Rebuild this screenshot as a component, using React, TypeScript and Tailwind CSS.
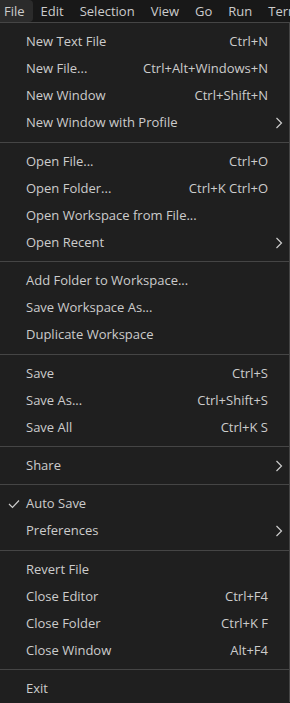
import React from "react";

type Item =
  | { type: "sep"; h: number }
  | { type: "item"; label: string; shortcut?: string; sub?: boolean; checked?: boolean };

const items: Item[] = [
  { type: "item", label: "New Text File", shortcut: "Ctrl+N" },
  { type: "item", label: "New File...", shortcut: "Ctrl+Alt+Windows+N" },
  { type: "item", label: "New Window", shortcut: "Ctrl+Shift+N" },
  { type: "item", label: "New Window with Profile", sub: true },
  { type: "sep", h: 12 },
  { type: "item", label: "Open File...", shortcut: "Ctrl+O" },
  { type: "item", label: "Open Folder...", shortcut: "Ctrl+K Ctrl+O" },
  { type: "item", label: "Open Workspace from File..." },
  { type: "item", label: "Open Recent", sub: true },
  { type: "sep", h: 11 },
  { type: "item", label: "Add Folder to Workspace..." },
  { type: "item", label: "Save Workspace As..." },
  { type: "item", label: "Duplicate Workspace" },
  { type: "sep", h: 12 },
  { type: "item", label: "Save", shortcut: "Ctrl+S" },
  { type: "item", label: "Save As...", shortcut: "Ctrl+Shift+S" },
  { type: "item", label: "Save All", shortcut: "Ctrl+K S" },
  { type: "sep", h: 11 },
  { type: "item", label: "Share", sub: true },
  { type: "sep", h: 11 },
  { type: "item", label: "Auto Save", checked: true },
  { type: "item", label: "Preferences", sub: true },
  { type: "sep", h: 12 },
  { type: "item", label: "Revert File" },
  { type: "item", label: "Close Editor", shortcut: "Ctrl+F4" },
  { type: "item", label: "Close Folder", shortcut: "Ctrl+K F" },
  { type: "item", label: "Close Window", shortcut: "Alt+F4" },
  { type: "sep", h: 11 },
  { type: "item", label: "Exit" },
];

const menus = ["File", "Edit", "Selection", "View", "Go", "Run", "Terminal"];

function Chevron() {
  return (
    <svg width="8" height="12" viewBox="0 0 8 12" fill="none">
      <path d="M1.5 1 L6.5 6 L1.5 11" stroke="#cccccc" strokeWidth="1.2" />
    </svg>
  );
}

function Check() {
  return (
    <svg width="12" height="10" viewBox="0 0 12 10" fill="none">
      <path d="M1 5 L4.5 8.5 L11 1.5" stroke="#cccccc" strokeWidth="1.2" />
    </svg>
  );
}

export default function App() {
  return (
    <div
      className="w-[290px] h-[703px] overflow-hidden bg-[#1f1f1f] text-[#cccccc] text-[13px]"
      style={{ fontFamily: '"Open Sans", "Noto Sans", sans-serif' }}
    >
      <div className="h-[22px] bg-[#181818] flex items-center ml-[-4px] whitespace-nowrap overflow-hidden w-[294px]">
        {menus.map((m, i) => (
          <div
            key={m}
            className={
              "h-[22px] px-[8px] flex items-center leading-none shrink-0 " +
              (i === 0 ? "bg-[#2b2b2b] rounded-[4px]" : "")
            }
          >
            {m}
          </div>
        ))}
      </div>
      <div className="border-t border-[#454545] pt-[5px] border-r">
        {items.map((it, i) =>
          it.type === "sep" ? (
            <div
              key={i}
              className={"flex items-center " + (it.h === 12 ? "h-[12px]" : "h-[11px]")}
            >
              <div className="h-px w-full bg-[#454545]" />
            </div>
          ) : (
            <div key={i} className="h-[27px] flex items-center relative">
              <div className="w-[26px] flex justify-center pl-[2px]">
                {it.checked ? <Check /> : null}
              </div>
              <div className="flex-1 whitespace-nowrap">{it.label}</div>
              {it.shortcut ? (
                <div className="pr-[21px] whitespace-nowrap">{it.shortcut}</div>
              ) : null}
              {it.sub ? (
                <div className="pr-[6px] flex items-center">
                  <Chevron />
                </div>
              ) : null}
            </div>
          )
        )}
      </div>
    </div>
  );
}
